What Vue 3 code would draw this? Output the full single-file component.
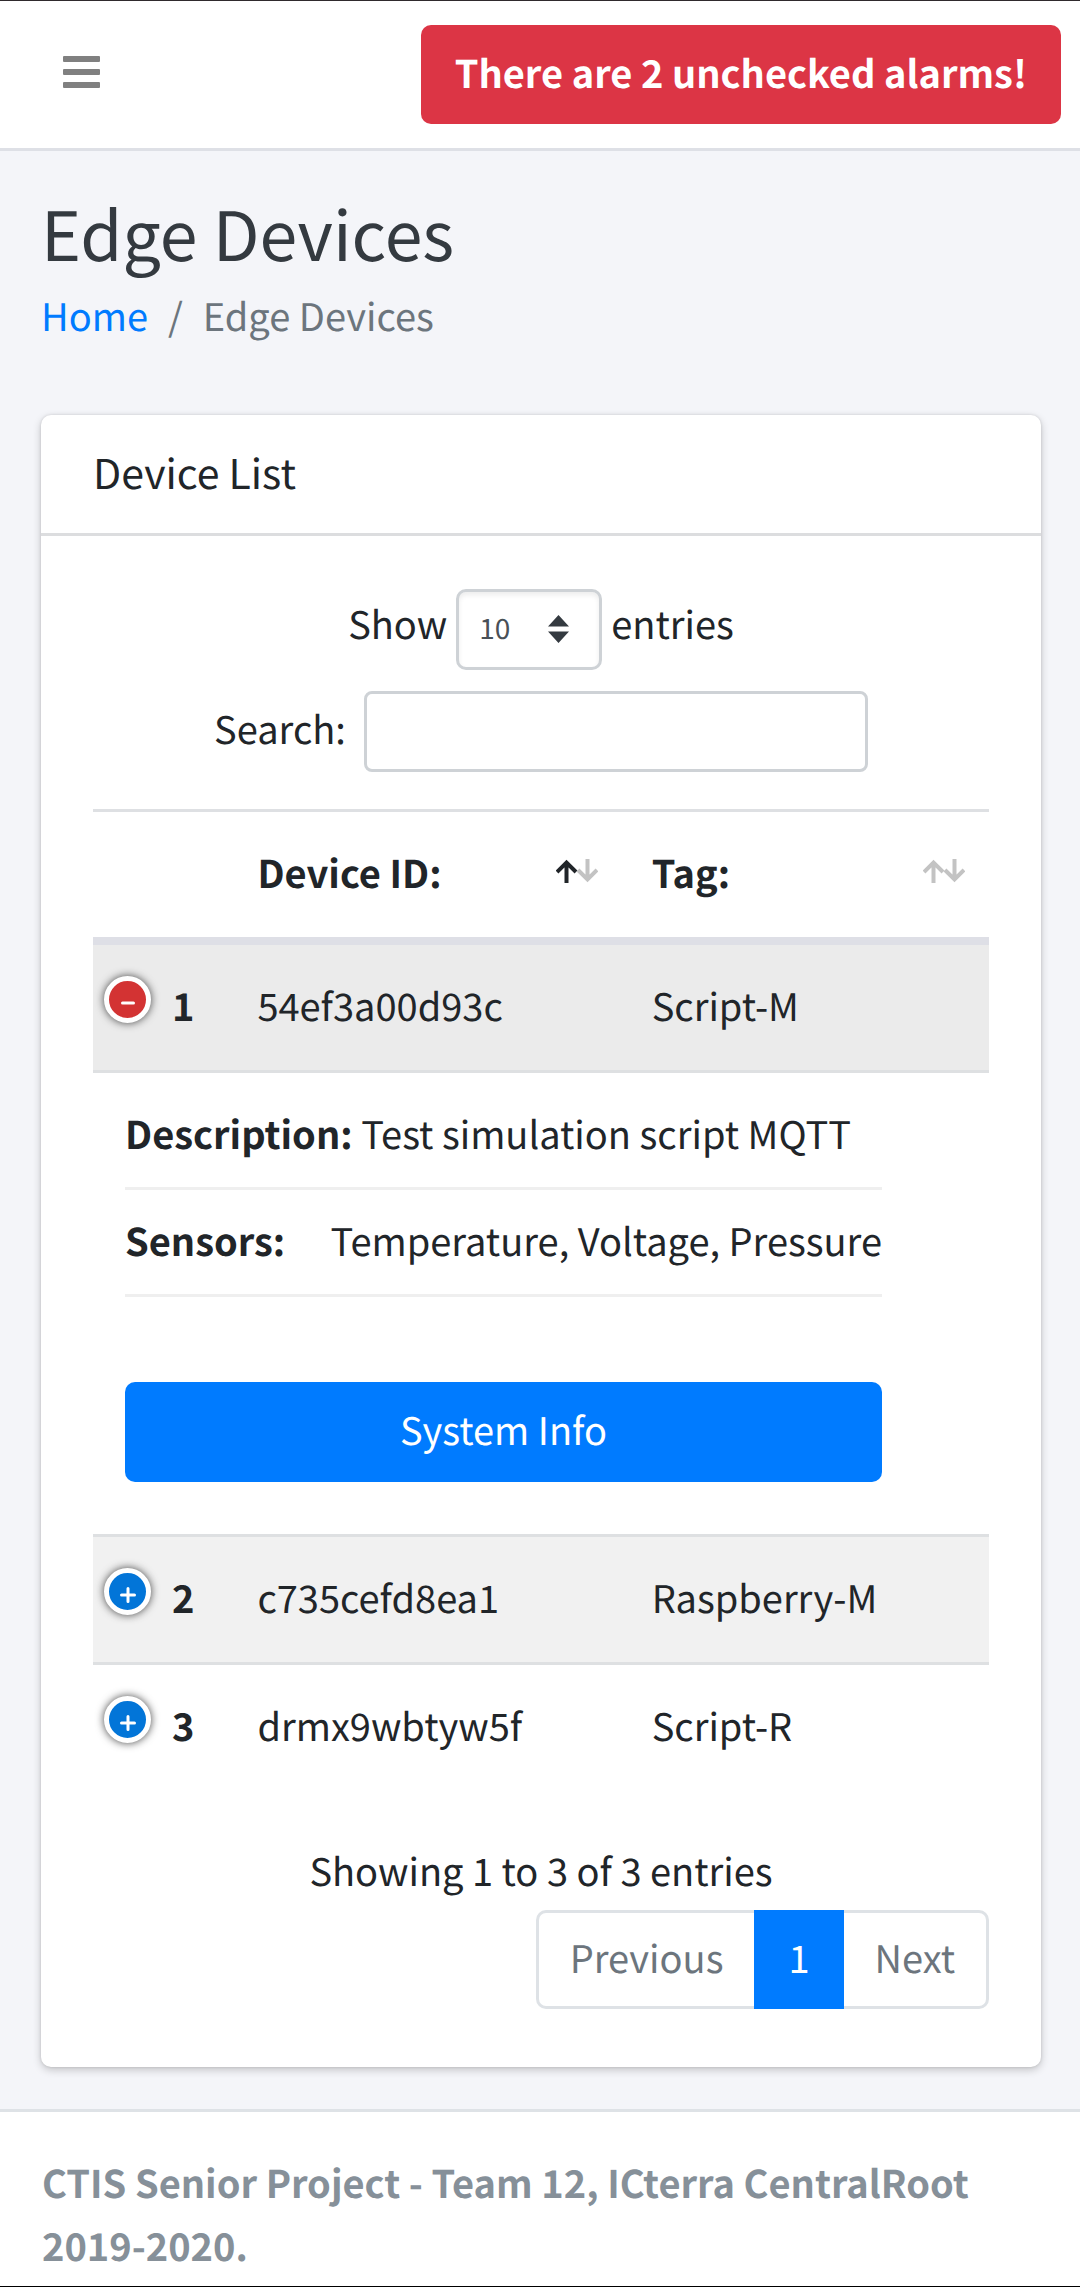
<script setup>
import { ref } from 'vue'

const pageSize = ref('10')
const search = ref('')
const openId = ref(1)

const devices = [
  {
    id: 1,
    deviceId: '54ef3a00d93c',
    tag: 'Script-M',
    description: 'Test simulation script MQTT',
    sensors: 'Temperature, Voltage, Pressure'
  },
  { id: 2, deviceId: 'c735cefd8ea1', tag: 'Raspberry-M', description: '', sensors: '' },
  { id: 3, deviceId: 'drmx9wbtyw5f', tag: 'Script-R', description: '', sensors: '' }
]

function toggle(id) {
  openId.value = openId.value === id ? null : id
}
</script>

<template>
  <div class="page">
    <nav class="navbar">
      <button class="menu" type="button" aria-label="Toggle menu">
        <svg width="38" height="32" viewBox="0 0 38 32" aria-hidden="true">
          <rect width="37" height="6" rx="1" />
          <rect y="13" width="37" height="6" rx="1" />
          <rect y="26" width="37" height="6" rx="1" />
        </svg>
      </button>
      <button class="alarm" type="button">There are 2 unchecked alarms!</button>
    </nav>

    <main class="content">
      <h1>Edge Devices</h1>
      <ol class="breadcrumb">
        <li><a href="#">Home</a></li>
        <li class="slash" aria-hidden="true">/</li>
        <li>Edge Devices</li>
      </ol>

      <section class="card">
        <header class="card-header"><h2>Device List</h2></header>
        <div class="card-body">
          <div class="length">
            <label for="length">Show</label>
            <span class="select-wrap">
              <select id="length" v-model="pageSize">
                <option>10</option>
                <option>25</option>
                <option>50</option>
              </select>
              <svg class="caret" width="21" height="28" viewBox="0 0 21 28" aria-hidden="true">
                <path d="M0 11.500 10.500 0 21 11.500zM0 16.500h21L10.500 28z" />
              </svg>
            </span>
            <span>entries</span>
          </div>
          <div class="filter">
            <label for="search">Search:</label>
            <input id="search" v-model="search" type="search" />
          </div>

          <table class="devices">
            <colgroup>
              <col class="col-no" />
              <col class="col-id" />
              <col />
            </colgroup>
            <thead>
              <tr>
                <th></th>
                <th scope="col" aria-sort="ascending">
                  <button class="sort" type="button">
                    Device ID:
                    <svg width="42" height="24" viewBox="0 0 42 24" aria-hidden="true">
                      <path class="faint" d="M31.500 0v20M22 11l9.500 9.500L41 11" />
                      <path d="M10.500 24V4M1 13l9.500-9.500L20 13" />
                    </svg>
                  </button>
                </th>
                <th scope="col">
                  <button class="sort" type="button">
                    Tag:
                    <svg width="42" height="24" viewBox="0 0 42 24" aria-hidden="true">
                      <path class="faint" d="M31.500 0v20M22 11l9.500 9.500L41 11M10.500 24V4M1 13l9.500-9.500L20 13" />
                    </svg>
                  </button>
                </th>
              </tr>
            </thead>
            <tbody>
              <template v-for="d in devices" :key="d.id">
                <tr class="row" :class="{ open: openId === d.id, shaded: d.id === 2 }">
                  <th scope="row" class="number">
                    <button
                      class="expand"
                      type="button"
                      :aria-expanded="openId === d.id"
                      aria-label="Details"
                      @click="toggle(d.id)"
                    >
                      <svg width="37" height="37" viewBox="0 0 37 37" aria-hidden="true">
                        <path v-if="openId === d.id" d="M13.500 22h11" />
                        <path v-else d="M12.500 22h13M19 15.500v13" />
                      </svg>
                    </button>
                    {{ d.id }}
                  </th>
                  <td>{{ d.deviceId }}</td>
                  <td>{{ d.tag }}</td>
                </tr>
                <tr v-if="openId === d.id" class="child">
                  <td colspan="3">
                    <div class="details">
                      <ul>
                        <li>
                          <span class="title">Description:</span> <span>{{ d.description }}</span>
                        </li>
                        <li>
                          <span class="title">Sensors:</span> <span>{{ d.sensors }}</span>
                        </li>
                      </ul>
                      <button class="info-button" type="button">System Info</button>
                    </div>
                  </td>
                </tr>
              </template>
            </tbody>
          </table>

          <p class="summary">Showing 1 to 3 of 3 entries</p>
          <div class="pagination">
            <button type="button">Previous</button>
            <button type="button" class="active" aria-current="page">1</button>
            <button type="button">Next</button>
          </div>
        </div>
      </section>
    </main>

    <footer class="footer">CTIS Senior Project - Team 12, ICterra CentralRoot 2019-2020.</footer>
  </div>
</template>

<style>
body {
  margin: 0;
  background: #fff;
}
</style>

<style scoped>
.page,
.page * {
  box-sizing: border-box;
}

.page {
  background: #f4f5f9;
  color: #212529;
  font-family: "Noto Sans CJK SC", "Noto Sans CJK JP", sans-serif;
  font-size: 38px;
  line-height: 63px;
  text-rendering: geometricPrecision;
}

button,
input,
select {
  font: inherit;
  color: inherit;
  margin: 0;
  border-radius: 0;
  text-rendering: inherit;
}

button {
  border: 0;
  padding: 0;
  background: none;
  white-space: nowrap;
}

h1,
h2,
p,
ul,
ol {
  margin: 0;
  padding: 0;
  font-weight: 400;
  list-style: none;
}

.navbar {
  display: flex;
  align-items: center;
  justify-content: space-between;
  padding: 24px 19px 24px 63px;
  background: #fff;
  border-top: 1px solid #2f2a2d;
  border-bottom: 3px solid #dee0e6;
}

.menu {
  padding-bottom: 5px;
}

.menu svg {
  display: block;
  fill: #808080;
}

.alarm {
  padding: 15px 34px 21px;
  border-radius: 10px;
  background: #dc3545;
  color: #fff;
  font-weight: 700;
}

.content {
  padding: 36px 39px 42px 41px;
}

h1 {
  color: #343a40;
  font-size: 68px;
  line-height: 90px;
}

.breadcrumb {
  display: flex;
  gap: 20px;
  margin: 6px 0 69px;
  color: #6c757d;
}

.breadcrumb a {
  color: #007bff;
  text-decoration: none;
}

.card {
  border-radius: 10px;
  background: #fff;
  box-shadow: 0 0 3px rgba(0, 0, 0, 0.125), 0 3px 8px rgba(0, 0, 0, 0.2);
}

.card-header {
  padding: 25px 52px 30px;
  border-bottom: 3px solid #dcdddf;
}

h2 {
  font-size: 41px;
}

.card-body {
  padding: 53px 52px 58px;
}

.length {
  display: flex;
  align-items: baseline;
  justify-content: center;
  gap: 9px;
}

.select-wrap {
  position: relative;
  display: flex;
}

select {
  width: 146px;
  height: 81px;
  padding: 12px 60px 16px 20px;
  border: 3px solid #ced2d6;
  border-radius: 10px;
  background: #fff;
  box-shadow: inset 0 3px 5px rgba(0, 0, 0, 0.075);
  color: #495057;
  font-size: 28px;
  line-height: normal;
  appearance: none;
}

.caret {
  position: absolute;
  top: 26px;
  right: 33px;
  fill: #343a40;
  pointer-events: none;
}

.filter {
  display: flex;
  align-items: center;
  justify-content: center;
  gap: 18px;
  margin: 21px 0 37px;
}

.filter label {
  padding-bottom: 8px;
}

input {
  width: 504px;
  height: 81px;
  padding: 10px 21px;
  border: 3px solid #ced2d6;
  border-radius: 8px;
  background: #fff;
  appearance: none;
}

.devices {
  width: 100%;
  border-spacing: 0;
  table-layout: fixed;
  text-align: left;
}

.col-no {
  width: 15%;
}

.col-id {
  width: 44%;
}

.devices thead th {
  padding: 28px 24px 34px 30px;
  border-top: 3px solid #dee0e3;
  border-bottom: 8px solid #dedfe6;
}

.sort {
  display: flex;
  align-items: center;
  justify-content: space-between;
  width: 100%;
  font-weight: 700;
}

.sort svg {
  margin-bottom: 2px;
  fill: none;
  stroke: #212529;
  stroke-width: 4;
}

.sort .faint {
  stroke: #c3c3c3;
}

.row th,
.row td {
  padding: 28px 0 34px 30px;
  border-bottom: 3px solid #dee0e2;
}

.row:last-child th,
.row:last-child td {
  border-bottom: 0;
}

.row.shaded {
  background: #f1f1f1;
}

.row.open {
  background: #ebebeb;
}

.row .number {
  position: relative;
  padding-left: 79px;
}

.expand {
  position: absolute;
  top: 31px;
  left: 11px;
  width: 47px;
  height: 47px;
  border: 5px solid #fff;
  border-radius: 50%;
  background: #0275d8;
  box-shadow: 0 0 8px #444;
}

.open .expand {
  background: #d33333;
}

.expand svg {
  display: block;
  fill: none;
  stroke: #fff;
  stroke-width: 3;
  stroke-linecap: round;
}

.child td {
  padding: 28px 32px 52px;
  border-bottom: 3px solid #dee0e2;
}

.details {
  width: fit-content;
}

.details li {
  padding: 18px 0 23px;
  border-bottom: 3px solid #efefef;
}

.details li:first-child {
  padding-top: 0;
}

.title {
  display: inline-block;
  min-width: 197px;
  font-weight: 700;
}

.info-button {
  display: block;
  width: 100%;
  margin-top: 85px;
  padding: 15px 0 22px;
  border-radius: 10px;
  background: #007bff;
  color: #fff;
}

.summary {
  margin: 48px 0 9px;
  text-align: center;
}

.pagination {
  display: flex;
  justify-content: flex-end;
}

.pagination button {
  padding: 12px 31px 18px;
  border: 3px solid #dee2e6;
  background: #fff;
  color: #6c757d;
}

.pagination button:first-child {
  border-right: 0;
  border-radius: 10px 0 0 10px;
}

.pagination button:last-child {
  border-left: 0;
  border-radius: 0 10px 10px 0;
}

.pagination .active {
  border-color: #007bff;
  background: #007bff;
  color: #fff;
}

.footer {
  padding: 38px 42px 10px;
  border-top: 3px solid #dee2e6;
  border-bottom: 1px solid #000;
  background: #fff;
  color: #869099;
  font-weight: 700;
}
</style>
